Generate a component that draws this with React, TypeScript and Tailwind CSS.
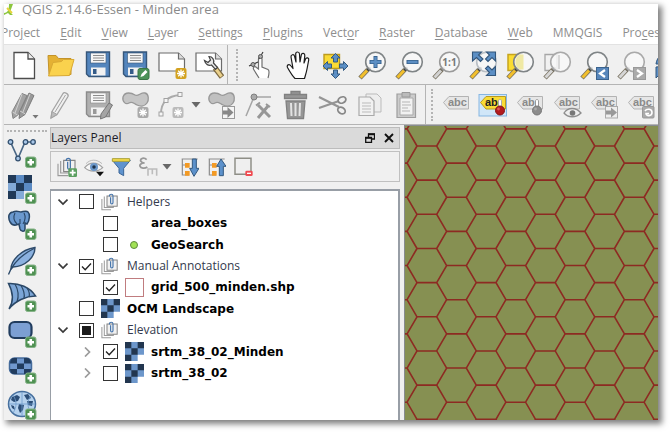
import { ReactNode } from "react";
import clsx from "clsx";

function Svg({ children, className = "size-[30px]" }: { children: ReactNode; className?: string }) {
  return (
    <svg viewBox="0 0 30 30" fill="none" className={clsx("shrink-0", className)} aria-hidden="true">
      {children}
    </svg>
  );
}

function AddBadge() {
  return (
    <g>
      <rect x="18.5" y="19" width="10.5" height="10.5" rx="2" fill="#4f9152" stroke="#87b489" />
      <path d="M23.75 21v6.5M20.5 24.25H27" stroke="#fff" strokeWidth="2.6" />
    </g>
  );
}

function StarBadge({ color, x = 18, y = 18 }: { color: string; x?: number; y?: number }) {
  return (
    <g transform={`translate(${x} ${y})`}>
      <rect x="0.5" y="0.5" width="11" height="11" rx="2" fill={color} />
      <path d="M6 2v8M2 6h8M3.2 3.2l5.6 5.6M8.8 3.2L3.2 8.8" stroke="#fff" strokeWidth="1.3" />
    </g>
  );
}

function Floppy({ body, edge, shutter }: { body: string; edge: string; shutter: string }) {
  return (
    <g>
      <path d="M4 2h22.500v24.500H6L3.500 24V2z" fill={body} stroke={edge} strokeWidth="1.4" />
      <rect x="7.500" y="3" width="15.500" height="10" fill="#f6f6f6" stroke={edge} strokeWidth="0.6" />
      <path d="M10 5.500h11M10 8h11M10 10.500h11" stroke="#8c8c8c" strokeWidth="1.1" />
      <rect x="8" y="17.500" width="14.500" height="8" fill="#f1f1f1" />
      <rect x="10" y="19" width="3.500" height="5" fill={shutter} />
    </g>
  );
}

function Lens({ handle = "#f2bf2c", edge = "#7f8486", tip = "#222", children }: { handle?: string; edge?: string; tip?: string; children?: ReactNode }) {
  return (
    <g>
      <path d="M11 19.500L3 28" stroke="#77705e" strokeWidth="4.600" />
      <path d="M10 20.500L3.500 27.500" stroke={handle} strokeWidth="3" />
      <circle cx="12" cy="18.800" r="2" fill={tip} />
      <circle cx="18.500" cy="12" r="9.800" fill="#f8f8f8" fillOpacity="0.85" stroke={edge} strokeWidth="1.6" />
      {children}
    </g>
  );
}

const NewIcon = () => (
  <Svg>
    <path d="M5 2.500h14l6.500 6.500v19.500H5z" fill="#fff" stroke="#4c4c4c" strokeWidth="1.3" />
    <path d="M19 2.500V9h6.500" fill="#eee" stroke="#4c4c4c" strokeWidth="1.3" />
  </Svg>
);

const OpenIcon = () => (
  <Svg>
    <path d="M2 5.500h8l2.500 3h12.500v16H3z" fill="#e4b133" stroke="#c3932a" />
    <path d="M2.500 26L7 12.500l8.500-1 2-2H28l-4.500 16z" fill="#fad24d" stroke="#d9a932" />
  </Svg>
);

const SaveIcon = () => (
  <Svg>
    <Floppy body="#5385bd" edge="#365679" shutter="#345b88" />
  </Svg>
);

const SaveAsIcon = () => (
  <Svg>
    <Floppy body="#5385bd" edge="#365679" shutter="#345b88" />
    <rect x="18" y="18.500" width="11" height="11" rx="2" fill="#4b9258" stroke="#397545" />
    <path d="M20.500 27l1-3 4-4 2 2-4 4z" fill="#fff" />
  </Svg>
);

const ComposerIcon = () => (
  <Svg>
    <path d="M2 3h19.500l6 6v12H2z" fill="#fff" stroke="#6b6b6b" strokeWidth="1.2" />
    <path d="M21.500 3v6h6" fill="#ddd" stroke="#6b6b6b" strokeWidth="1.2" />
    <StarBadge color="#d3a220" x={18} y={17.5} />
  </Svg>
);

const ManagerIcon = () => (
  <Svg>
    <path d="M2 3h19.500l6 6v12H2z" fill="#fff" stroke="#6b6b6b" strokeWidth="1.2" />
    <path d="M21.500 3v6h6" fill="#ddd" stroke="#6b6b6b" strokeWidth="1.2" />
    <path d="M21 18l7 9" stroke="#7b6840" strokeWidth="5.500" />
    <path d="M21.500 18.500l6 8" stroke="#ead08b" strokeWidth="3" />
    <path d="M10.500 10.500c1 4 4 5.500 7 4.500l4 4.500 2-2-4-4.500c1-3-1-6.500-4.500-6.500l1.500 3.500-2.500 2.500z" fill="#e8e8e8" stroke="#444" strokeWidth="1.2" />
  </Svg>
);

const TouchIcon = () => (
  <Svg>
    <path d="M13 28l-5-8c-2-3 1-4 2.500-2.500L12.500 19V9c0-3 3.500-3 3.500 0v8l6 2.500c1.500 1 1 5 0 8.500" fill="#fff" stroke="#6f6f6f" strokeWidth="1.200" />
    <path d="M3 16l9-4M13 9l4-7" stroke="#333" strokeWidth="1.1" />
    <circle cx="14.500" cy="6.500" r="2" fill="#aaa" stroke="#555" />
    <circle cx="7" cy="14.500" r="2" fill="#aaa" stroke="#555" />
  </Svg>
);

const PanIcon = () => (
  <Svg>
    <path d="M12 28.500c-3-3-5-6.500-7.500-11-1.200-2.500 1.700-4 3.500-1.500l2 2.500L8 7c-.3-2.600 3-3.200 3.600-.7L13 12l-.3-8c0-2.700 3.600-2.700 3.800 0l.5 8 1.300-7c.5-2.500 3.800-1.900 3.500.6L21 13l1.500-4c.9-2 3.700-1.200 3.200 1L24 19c-.6 3.500-1.500 6-2.500 9.500z" fill="#fff" stroke="#1b1b1b" strokeWidth="1.2" strokeLinejoin="round" />
  </Svg>
);

const PanSelectionIcon = () => (
  <Svg>
    <path d="M4 4.500h15.500v14H4z" fill="#fadb35" stroke="#bd9b1e" strokeWidth="1.4" />
    <path d="M15.500 3.500l4.500 4.500h-2.500v4h-4V8H11zM15.500 28.500l4.500-4.500h-2.500v-4h-4v4H11zM3 16l4.500-4.500V14h4v4h-4v2.500zM28 16l-4.500-4.500V14h-4v4h4v2.500z" fill="#5c8fc5" stroke="#33597f" strokeWidth="1" />
  </Svg>
);

const ZoomInIcon = () => (
  <Svg>
    <Lens>
      <path d="M18.500 6v12M12.500 12h12" stroke="#39638f" strokeWidth="4" />
      <path d="M18.500 7v10M13.500 12h10" stroke="#5d8fc4" strokeWidth="2.400" />
    </Lens>
  </Svg>
);

const ZoomOutIcon = () => (
  <Svg>
    <Lens>
      <path d="M12.500 12h12" stroke="#39638f" strokeWidth="4" />
      <path d="M13.500 12h10" stroke="#5d8fc4" strokeWidth="2.400" />
    </Lens>
  </Svg>
);

const ZoomNativeIcon = () => (
  <Svg>
    <Lens handle="#d2d2d2" edge="#9a9a9a" tip="#777">
      <text x="18.500" y="15.500" textAnchor="middle" fontSize="10" fontWeight="700" fill="#777" fontFamily="Open Sans, sans-serif">1:1</text>
    </Lens>
  </Svg>
);

const ZoomFullIcon = () => (
  <Svg>
    <Lens edge="#b9bfc5" />
    <path
      d="M4.500 2h9l-3 3 4.500 4-2.500 2.500L8.500 7.500l-4 3.500zM27.500 2h-9l3 3L17.500 9l2.500 2.500 4-4 3.500 3.500zM27.500 25.500h-9l3-3-4-4L20 16l4 4 3.500-3.500z"
      fill="#5c8fc5"
      stroke="#33567b"
      strokeWidth="1.100"
    />
  </Svg>
);

const ZoomSelectionIcon = () => (
  <Svg>
    <path d="M3 4.500h12v16H3z" fill="#fbdc31" stroke="#c6a41e" strokeWidth="1.500" />
    <Lens>
      <path d="M18.500 4.500h-3c-3 1-5 4-5 7.500s2 6.500 5 7.500h3z" fill="#f0e9a4" />
    </Lens>
  </Svg>
);

const ZoomLayerIcon = () => (
  <Svg>
    <path d="M3 4.500h12v16H3z" fill="#f1f1f1" stroke="#a6a6a6" strokeWidth="1.300" />
    <Lens handle="#d6d6d6" edge="#a9a9a9" tip="#777">
      <path d="M17 5v14" stroke="#ccc" strokeWidth="1.500" />
    </Lens>
  </Svg>
);

const ZoomLastIcon = () => (
  <Svg>
    <Lens />
    <rect x="17.500" y="17.500" width="12" height="12" fill="#5786bb" stroke="#3b638e" />
    <path d="M26 20l-5 3.500 5 3.500" stroke="#fff" strokeWidth="2.200" />
  </Svg>
);

const ZoomNextIcon = () => (
  <Svg>
    <Lens handle="#d6d6d6" edge="#a9a9a9" tip="#777" />
    <rect x="17.500" y="17.500" width="12" height="12" fill="#aaa" stroke="#999" />
    <path d="M21 20l5 3.500-5 3.500" stroke="#fff" strokeWidth="2.200" />
  </Svg>
);

const RefreshIcon = () => (
  <Svg>
    <path d="M3 14C4 6 10 3 16 3v6c-5 0-6 2-7 5z" fill="#5c8fc5" stroke="#33597f" />
    <path d="M3 17l10-1-3 4c3 3 7 3 10 0v7c-6 2-11 1-14-2l-3 3z" fill="#5c8fc5" stroke="#33597f" />
  </Svg>
);

const EditsIcon = () => (
  <Svg>
    <path d="M3 22L13 3.500l5 2L9 25l-5 3.500z" fill="#a3a3a3" stroke="#858585" />
    <path d="M11 21L20 3l5 2.500-9 19-6 4z" fill="#999" stroke="#7d7d7d" />
    <path d="M3.500 22l5 3M11 21l5.500 3M13 4l-7 19M21 4l-7 18" stroke="#d0d0d0" />
    <path d="M23.500 25h6l-3 3.500z" fill="#777" />
  </Svg>
);

const PencilIcon = () => (
  <Svg>
    <path d="M6 21.500L17 3.500c1.500-2 6 .5 5 3l-11 18-6 3.500z" fill="#f0f0f0" stroke="#a3a3a3" strokeWidth="1.300" />
    <path d="M6 21.500l5 3L5 28zM9 22L19.500 5" stroke="#a3a3a3" fill="#bbb" />
  </Svg>
);

const SaveEditsIcon = () => (
  <Svg>
    <Floppy body="#b0b0b0" edge="#8b8b8b" shutter="#999" />
    <path d="M18 24l8-11 3.500 2-7 12-5 2z" fill="#a5a5a5" stroke="#777" />
  </Svg>
);

const AddFeatureIcon = () => (
  <Svg>
    <path d="M3 7c2-6 9-4 12-2s6-3 10-2 4 7 2 10-6 4-10 2-5-4-8-2-7-1-6-6z" fill="#c5c5c5" stroke="#989898" strokeWidth="1.300" />
    <StarBadge color="#aaa" x={17} y={16.5} />
  </Svg>
);

const CurveIcon = () => (
  <Svg>
    <path d="M4 24c0-12 6-18 19-19" stroke="#aaa" strokeWidth="1.800" />
    <g fill="#f5f5f5" stroke="#a2a2a2">
      <rect x="2" y="22" width="4" height="4" />
      <rect x="7" y="8.500" width="4" height="4" />
      <rect x="21" y="2.500" width="4" height="4" />
    </g>
    <StarBadge color="#bbb" x={15} y={16.5} />
  </Svg>
);

const MoveFeatureIcon = () => (
  <Svg>
    <path d="M3 7c2-6 9-4 12-2s6-3 10-2 4 7 2 10-6 4-10 2-5-4-8-2-7-1-6-6z" fill="#c0c0c0" stroke="#989898" strokeWidth="1.300" />
    <rect x="16.500" y="16.500" width="12" height="12" fill="#f5f5f5" stroke="#999" />
    <path d="M17 20.500h4.500V17l6 5.500-6 5.500v-3.500H17z" fill="#888" />
  </Svg>
);

const NodeToolIcon = () => (
  <Svg>
    <path d="M3 26l8-19h17M11 7l17 0" stroke="#a5a5a5" strokeWidth="1.500" />
    <circle cx="11" cy="7" r="3" fill="#aaa" stroke="#7e7e7e" />
    <path d="M15 28l10-12M15 15l12 12" stroke="#979797" strokeWidth="3" />
    <path d="M13 15.500l4-3M23 14l4 3" stroke="#979797" strokeWidth="2" />
  </Svg>
);

const TrashIcon = () => (
  <Svg>
    <path d="M11 4V1.500h9V4M4.500 4.500h22v4h-22z" fill="#969696" stroke="#808080" strokeWidth="1.300" />
    <path d="M6 11h19l-1.500 17.500h-16z" fill="#969696" stroke="#808080" strokeWidth="1.300" />
    <path d="M11 13l.5 13M15.500 13v13M20 13l-.5 13" stroke="#e3e3e3" strokeWidth="2" />
  </Svg>
);

const CutIcon = () => (
  <Svg>
    <path d="M2 7l20 10M2 18l20-7" stroke="#959595" strokeWidth="2.200" />
    <ellipse cx="25" cy="10" rx="4" ry="3" stroke="#888" strokeWidth="1.800" transform="rotate(-25 25 10)" />
    <ellipse cx="24.500" cy="20.500" rx="4" ry="3" stroke="#888" strokeWidth="1.800" transform="rotate(35 24.500 20.500)" />
  </Svg>
);

const CopyIcon = () => (
  <Svg>
    <path d="M12 4h11l4 4v14H12z" fill="#eee" stroke="#bbb" />
    <path d="M5 7h11l4 4v14.500H5z" fill="#f2f2f2" stroke="#aaa" strokeWidth="1.200" />
    <path d="M8 13h9M8 16h9M8 19h9M8 22h9" stroke="#bbb" />
  </Svg>
);

const PasteIcon = () => (
  <Svg>
    <path d="M6 4h18.500v23.500H6z" fill="#ccc" stroke="#9d9d9d" strokeWidth="1.200" />
    <path d="M9 8h13v17H9z" fill="#f2f2f2" stroke="#aaa" />
    <path d="M11 2.500h8V7h-8z" fill="#bbb" stroke="#999" />
    <path d="M11 12h8M11 15h9M11 18h6M11 21h8" stroke="#b5b5b5" />
  </Svg>
);

function TagIcon({ active, label = "abc", children }: { active?: boolean; label?: string; children?: ReactNode }) {
  return (
    <Svg>
      {active && <rect x="1" y="4.500" width="27.500" height="21.500" fill="#d0e6f8" stroke="#85b6e2" />}
      <path d="M2.500 12.500L8 6.500h19.500v12.500H8z" fill={active ? "#f9dc35" : "#e6e6e6"} stroke={active ? "#b99b22" : "#b3b3b3"} />
      <text x="7" y="16" fontSize="11" fontWeight="700" fill={active ? "#222" : "#8a8a8a"} fontFamily="Liberation Sans, sans-serif">{label}</text>
      {children}
    </Svg>
  );
}

const PinTagIcon = ({ active }: { active?: boolean }) => (
  <TagIcon active={active} label="ab">
    <path d="M20.500 19v-8c0-2 3-2 3 0v8" fill="#fff" stroke={active ? "#aaa" : "#999"} />
    <circle cx="22" cy="20.500" r="4.500" fill={active ? "#b31b1e" : "#8c8c8c"} stroke={active ? "#831418" : "#777"} />
    <circle cx="20.500" cy="19" r="1.400" fill={active ? "#d9595a" : "#aaa"} />
  </TagIcon>
);

const ShowTagIcon = () => (
  <TagIcon>
    <path d="M12 23c4-6 12-6 17 0-5 5-13 5-17 0z" fill="#eee" stroke="#8d8d8d" strokeWidth="1.300" />
    <circle cx="20.500" cy="23" r="2.800" fill="#777" />
  </TagIcon>
);

const MoveTagIcon = () => (
  <TagIcon>
    <rect x="16.500" y="16.500" width="12" height="11.500" fill="#eee" stroke="#aaa" />
    <path d="M17 20.500h5v-3l6 5-6 5v-3h-5z" fill="#999" />
  </TagIcon>
);

const RotateTagIcon = () => (
  <TagIcon>
    <rect x="16.500" y="16.500" width="11.500" height="11.500" rx="1" fill="#aaa" stroke="#999" />
    <path d="M19 21c2-3 7-2 7 1.500 0 4-6 4-6 1h3" stroke="#fff" strokeWidth="1.600" />
  </TagIcon>
);

const VectorIcon = () => (
  <Svg>
    <path d="M3.500 4L11 20.500 18 4h7" stroke="#4b6886" strokeWidth="1.700" />
    <g fill="#a9c7e8" stroke="#33506f" strokeWidth="1.300">
      <circle cx="3.500" cy="4" r="2.300" />
      <circle cx="11" cy="20.500" r="2.300" />
      <circle cx="18.500" cy="4" r="2.300" />
      <circle cx="26" cy="4" r="2.300" />
    </g>
    <AddBadge />
  </Svg>
);

const RasterIcon = () => (
  <Svg>
    <path d="M1 1h24v16h-8v8H1z" fill="#5b8bc4" />
    <path d="M1 1h8v8H1zM17 1h8v8h-8zM9 9h8v8H9zM1 17h8v8H1z" fill="#213a58" />
    <path d="M1 9h8v8H1zM9 17h8v8H9z" fill="#83aad7" />
    <AddBadge />
  </Svg>
);

const ElephantIcon = () => (
  <Svg>
    <path d="M6 2c4-2 6 0 8 0s5-2 7 0 2 8-1 12l-2-1v6c0 3-4 3-5 0l-1-5-3 1C4 16 1 10 2 5c1-2 2-3 4-3z" fill="#6b99cf" stroke="#294666" strokeWidth="1.500" />
    <path d="M8 3C6 7 7 11 10 14M17 3c2 4 1 8-1 11M13 9v5" stroke="#294666" strokeWidth="1.100" />
    <AddBadge />
  </Svg>
);

const FeatherIcon = () => (
  <Svg>
    <path d="M4 23C4 15 13 4 28 1.500 28 11 19 20 6 21z" fill="#8bb1df" stroke="#2d4a69" strokeWidth="1.400" />
    <path d="M1.500 28.500C5 19 14 9 27 2.500" stroke="#2d4a69" strokeWidth="1.300" />
    <AddBadge />
  </Svg>
);

const FanIcon = () => (
  <Svg>
    <path d="M1.500 1.500C12 1 23 5 28.500 14 19 14 8 19 2 27c5-8 4-17-.5-25.500z" fill="#7ba5d6" stroke="#2a4766" strokeWidth="1.500" />
    <path d="M8 2c4 7 4 12 2 18M14 3.500c3 5 4 9 3 13M20 6c2 3 3 6 2 9" stroke="#2a4766" strokeWidth="1.200" />
    <AddBadge />
  </Svg>
);

const BoxIcon = () => (
  <Svg>
    <rect x="2.500" y="4" width="22" height="16" rx="5" fill="#7c9fd3" stroke="#213c5e" strokeWidth="2.200" />
    <AddBadge />
  </Svg>
);

const MaskIcon = () => (
  <Svg>
    <rect x="2.500" y="4" width="22" height="16" rx="5" fill="#7199cf" stroke="#456b9b" strokeWidth="1.500" />
    <path d="M10 9.500h7V15h-7zM3 15h7v5H7c-2.500 0-4-2-4-5zM17 15h7c0 3-1.500 5-4 5h-3zM7 4h3v5.500H3C3 6 4.500 4 7 4zM17 4h3c2.500 0 4 2 4 5.500h-7z" fill="#213c5e" />
    <AddBadge />
  </Svg>
);

const GlobeIcon = () => (
  <Svg>
    <ellipse cx="15" cy="14" rx="13.500" ry="12.500" fill="#b6d2ee" stroke="#47709e" strokeWidth="1.500" />
    <path d="M5 7l5-2 3 2-2 4-4 1-3-2zM12 14l5 1-1 5-3 3-2-5zM17 5l4-1 3 4-4 2zM20 11l6 0-1 5-4-1zM4 15l3 1 1 4-3-2z" fill="#2c4e77" />
    <path d="M2 14h26M15 2v24M6 5c4 6 4 12 0 18M24 5c-4 6-4 12 0 18" stroke="#6d9bca" strokeWidth="0.800" />
    <AddBadge />
  </Svg>
);

const GroupIcon = ({ className, badge }: { className?: string; badge?: boolean }) => (
  <Svg className={className}>
    <path d="M1.500 10v18h15M5.500 6v18h15v-4" stroke="#9a9a9a" strokeWidth="1.700" />
    <path d="M10 5h17v17H10z" fill="#f1f1f1" stroke="#858585" strokeWidth="1.700" />
    <path d="M14 6v-1c0-4 6-4 6 0v11c0 3-4 3-4 0V7" stroke="#4574ab" strokeWidth="1.900" />
    {badge && (
      <g>
        <rect x="17" y="17" width="13" height="13" rx="2" fill="#5b9f60" />
        <path d="M23.500 19v9M19 23.500h9" stroke="#fff" strokeWidth="2.600" />
      </g>
    )}
  </Svg>
);

const EyeIcon = () => (
  <Svg className="size-5">
    <path d="M1 16C8 7 20 7 28 16c-7 7-20 7-27 0z" fill="#f6f6f6" stroke="#a2a2a2" strokeWidth="1.800" />
    <path d="M3 10C10 3 19 3 27 10" stroke="#bbb" strokeWidth="1.500" />
    <circle cx="15" cy="15" r="6" fill="#6b97c9" />
    <circle cx="15" cy="15" r="2.600" fill="#1d3048" />
    <path d="M18 22h12l-6 7z" fill="#111" />
  </Svg>
);

const FilterIcon = () => (
  <Svg className="size-5">
    <path d="M2 5h27L19 17v11l-7-4v-7z" fill="#5f93ce" stroke="#3a6596" strokeWidth="1.500" />
    <path d="M2 2.500h26v4H2z" fill="#f6dc4a" stroke="#a9a13a" strokeWidth="1.500" />
  </Svg>
);

const ExpressionIcon = () => (
  <Svg className="size-5">
    <path d="M13 4C9 0 3 2 4 6c1 2 4 3 6 3-5 0-8 2-7 5s7 4 11 1" stroke="#999" strokeWidth="2.600" />
    <path d="M15 28V18h13v10M21.500 18v8" stroke="#bcbcbc" strokeWidth="2.400" />
  </Svg>
);

const TreeIcon = ({ up }: { up?: boolean }) => (
  <Svg className="size-5">
    <path d="M4 3h24M5 3v24h10M5 12h8" stroke="#8d8d8d" strokeWidth="1.800" />
    <path d="M9 9h7v7H9zM9 21h7v7H9z" fill="#f39a24" />
    <path d={up ? "M16 14l6.500-11L30 14h-4v14h-6V14z" : "M16 17l6.500 12L30 17h-4V3h-6v14z"} fill="#5c91cb" stroke="#32587f" strokeWidth="1.500" />
  </Svg>
);

const RemoveIcon = () => (
  <Svg className="size-5">
    <path d="M3 2h24v24H3z" fill="#efefef" stroke="#8e8e86" strokeWidth="2.200" />
    <rect x="18.500" y="20.500" width="11" height="8" rx="2" fill="#f04a50" />
    <path d="M21 24.500h6" stroke="#fff" strokeWidth="2" />
  </Svg>
);

const LayerRasterIcon = () => (
  <Svg className="size-[19px]">
    <path d="M0 0h30v20H20v10H0z" fill="#6d97cb" />
    <path d="M0 0h10v10H0zM20 0h10v10H20zM10 10h10v10H10zM0 20h10v10H0z" fill="#22364f" />
  </Svg>
);

const DropArrow = () => (
  <svg viewBox="0 0 10 6" className="h-[6px] w-[10px] shrink-0" aria-hidden="true">
    <path d="M0.500 0h9L5 5.500z" fill="#686868" />
  </svg>
);

function Tool({ label, children }: { label: string; children: ReactNode }) {
  return (
    <button type="button" aria-label={label} className="flex w-[37px] shrink-0 justify-center">
      {children}
    </button>
  );
}

function Grip() {
  return <span className="mx-1 h-8 w-0 shrink-0 border-l-2 border-dotted border-[#b4b4b4]" />;
}

const menus = [
  ["Pro", "j", "ect"],
  ["", "E", "dit"],
  ["", "V", "iew"],
  ["", "L", "ayer"],
  ["", "S", "ettings"],
  ["", "P", "lugins"],
  ["Vect", "o", "r"],
  ["", "R", "aster"],
  ["", "D", "atabase"],
  ["", "W", "eb"],
  ["MMQGIS", "", ""],
  ["Pro", "c", "essing"],
];

function CheckBox({ id, state }: { id: string; state: string }) {
  return (
    <span className="relative mr-[7px] size-[15px] shrink-0">
      <input
        id={id}
        type="checkbox"
        defaultChecked={state === "on"}
        className="peer block size-[15px] appearance-none border border-[#333] bg-white"
      />
      <svg viewBox="0 0 15 15" fill="none" className="pointer-events-none absolute inset-0 hidden peer-checked:block">
        <path d="M3 7.500l3.200 3.300L12 4.500" stroke="#222" strokeWidth="1.300" />
      </svg>
      {state === "partial" && <span className="pointer-events-none absolute inset-[3px] bg-[#1c1c1c]" />}
    </span>
  );
}

type Row = {
  name: string;
  icon: "group" | "none" | "point" | "polygon" | "raster";
  state: "on" | "off" | "partial";
  child?: boolean;
  arrow?: "open" | "closed";
};

const rows: Row[] = [
  { name: "Helpers", icon: "group", state: "off", arrow: "open" },
  { name: "area_boxes", icon: "none", state: "off", child: true },
  { name: "GeoSearch", icon: "point", state: "off", child: true },
  { name: "Manual Annotations", icon: "group", state: "on", arrow: "open" },
  { name: "grid_500_minden.shp", icon: "polygon", state: "on", child: true },
  { name: "OCM Landscape", icon: "raster", state: "off" },
  { name: "Elevation", icon: "group", state: "partial", arrow: "open" },
  { name: "srtm_38_02_Minden", icon: "raster", state: "on", child: true, arrow: "closed" },
  { name: "srtm_38_02", icon: "raster", state: "off", child: true, arrow: "closed" },
];

function LayerRow({ row }: { row: Row }) {
  return (
    <li className={clsx("flex items-center", row.child && "pl-6")}>
      <span className="flex w-7 shrink-0 justify-center pr-1">
        {row.arrow && (
          <button type="button" aria-label={`Toggle ${row.name}`}>
            <svg viewBox="0 0 10 10" fill="none" className="size-[10px]">
              <path
                d={row.arrow === "open" ? "M0.500 2.500L5 7l4.500-4.500" : "M3 0.500L7.500 5 3 9.500"}
                stroke={row.arrow === "open" ? "#3a3a3a" : "#9b9b9b"}
                strokeWidth="1.700"
              />
            </svg>
          </button>
        )}
      </span>
      <CheckBox id={row.name} state={row.state} />
      <span className="flex w-[26px] shrink-0 items-center">
        {row.icon === "group" && <GroupIcon className="size-[18px]" />}
        {row.icon === "raster" && <LayerRasterIcon />}
        {row.icon === "polygon" && <span className="size-[19px] border border-[#c07c7f] bg-white" />}
        {row.icon === "point" && <span className="ml-[5px] size-2 rounded-full border border-[#5e8a3e] bg-[#a2e256]" />}
      </span>
      <label
        htmlFor={row.name}
        className={clsx(
          "whitespace-nowrap text-[12px]",
          row.icon === "group" ? "text-[#333a4d]" : "font-['DejaVu_Sans'] font-bold text-black",
        )}
      >
        {row.name}
      </label>
    </li>
  );
}

// Flat-topped hexagons: every column is shifted by half a cell height.
function hexGrid(width: number, height: number) {
  const step = 29.63;
  const half = 17.08;
  const side = 19.7;
  let d = "";
  for (let col = -1; col * step < width; col++) {
    const x = 12 + col * step;
    const start = col % 2 === 0 ? 20 - half * 2 : 20 - half * 3;
    for (let y = start; y < height + half; y += half * 2) {
      d += `M${x} ${y}h${side}l${step - side} ${half}M${x + side} ${y}l${step - side} ${-half}`;
    }
  }
  return d;
}

export default function App() {
  return (
    <div className="flex min-h-screen bg-white pt-1 pr-3 pb-3 pl-1 font-['Open_Sans',sans-serif]">
      <div className="flex min-w-0 flex-1 flex-col overflow-hidden bg-[#f0f0f0] shadow-[3px_3px_6px_1px_rgba(0,0,0,0.5)]">
        <header className="flex h-[18px] shrink-0 items-start gap-1 overflow-hidden bg-white">
          <svg viewBox="0 0 14 12" className="h-3 w-[14px] shrink-0" aria-hidden="true">
            <path d="M0 9c4 0 5-4 5-9h4L6 8l3 3H6L4 9l-4 2z" fill="#8cc63e" />
            <path d="M3 4l5 5" stroke="#e7d339" strokeWidth="2" />
          </svg>
          <h1 className="-mt-1 text-[13px] leading-[18px] whitespace-nowrap text-[#8a8a8a]">QGIS 2.14.6-Essen - Minden area</h1>
        </header>
        <div className="shrink-0 overflow-hidden bg-white">
          <nav className="-ml-[3px] flex h-[22px] gap-5 text-[12px] leading-[22px] text-[#8e8e8e]">
            {menus.map(([before, key, after]) => (
              <button type="button" key={before + key + after} className="shrink-0">
                {before}
                <span className="underline underline-offset-2">{key}</span>
                {after}
              </button>
            ))}
          </nav>
        </div>

        <div className="flex h-[41px] shrink-0 items-center overflow-hidden border-t border-b border-t-[#e2e2e2] border-b-[#b4b4b4] pl-px">
          <Tool label="New"><NewIcon /></Tool>
          <Tool label="Open"><OpenIcon /></Tool>
          <Tool label="Save"><SaveIcon /></Tool>
          <Tool label="Save as"><SaveAsIcon /></Tool>
          <Tool label="New composer"><ComposerIcon /></Tool>
          <Tool label="Composer manager"><ManagerIcon /></Tool>
          <span className="mr-1 h-full w-px shrink-0 bg-[#b4b4b4]" />
          <Grip />
          <Tool label="Touch"><TouchIcon /></Tool>
          <Tool label="Pan"><PanIcon /></Tool>
          <Tool label="Pan to selection"><PanSelectionIcon /></Tool>
          <Tool label="Zoom in"><ZoomInIcon /></Tool>
          <Tool label="Zoom out"><ZoomOutIcon /></Tool>
          <Tool label="Zoom to native"><ZoomNativeIcon /></Tool>
          <Tool label="Zoom full"><ZoomFullIcon /></Tool>
          <Tool label="Zoom to selection"><ZoomSelectionIcon /></Tool>
          <Tool label="Zoom to layer"><ZoomLayerIcon /></Tool>
          <Tool label="Zoom last"><ZoomLastIcon /></Tool>
          <Tool label="Zoom next"><ZoomNextIcon /></Tool>
          <Tool label="Refresh"><RefreshIcon /></Tool>
        </div>

        <div className="flex h-10 shrink-0 items-center overflow-hidden border-b border-[#b4b4b4] pl-px">
          <Tool label="Current edits"><EditsIcon /></Tool>
          <Tool label="Toggle editing"><PencilIcon /></Tool>
          <Tool label="Save edits"><SaveEditsIcon /></Tool>
          <Tool label="Add feature"><AddFeatureIcon /></Tool>
          <Tool label="Add circular string"><CurveIcon /></Tool>
          <span className="flex w-3 shrink-0 justify-center"><DropArrow /></span>
          <Tool label="Move feature"><MoveFeatureIcon /></Tool>
          <Tool label="Node tool"><NodeToolIcon /></Tool>
          <Tool label="Delete"><TrashIcon /></Tool>
          <Tool label="Cut"><CutIcon /></Tool>
          <Tool label="Copy"><CopyIcon /></Tool>
          <Tool label="Paste"><PasteIcon /></Tool>
          <span className="mx-px h-full w-px shrink-0 bg-[#b4b4b4]" />
          <Grip />
          <Tool label="Labels"><TagIcon /></Tool>
          <Tool label="Highlight pinned labels"><PinTagIcon active /></Tool>
          <Tool label="Pin labels"><PinTagIcon /></Tool>
          <Tool label="Show labels"><ShowTagIcon /></Tool>
          <Tool label="Move label"><MoveTagIcon /></Tool>
          <Tool label="Rotate label"><RotateTagIcon /></Tool>
        </div>

        <div className="flex flex-1">
          <aside className="flex w-[46px] shrink-0 flex-col gap-[6px] pt-[5px] pl-[3px]">
            <span className="w-10 border-t-2 border-dotted border-[#b4b4b4]" />
            <button type="button" aria-label="Add vector layer"><VectorIcon /></button>
            <button type="button" aria-label="Add raster layer"><RasterIcon /></button>
            <button type="button" aria-label="Add PostGIS layer"><ElephantIcon /></button>
            <button type="button" aria-label="Add SpatiaLite layer"><FeatherIcon /></button>
            <button type="button" aria-label="Add MSSQL layer"><FanIcon /></button>
            <button type="button" aria-label="Add Oracle layer"><BoxIcon /></button>
            <button type="button" aria-label="Add Oracle raster"><MaskIcon /></button>
            <button type="button" aria-label="Add WMS layer"><GlobeIcon /></button>
          </aside>

          <section className="flex w-[350px] shrink-0 flex-col pt-[2px]">
            <div className="flex h-[22px] items-center border border-[#bcbcbc] bg-[#dadada]">
              <h2 className="flex-1 text-[12px] text-[#1c1c28]">Layers Panel</h2>
              <button type="button" aria-label="Float" className="mr-[9px]">
                <svg viewBox="0 0 10 10" fill="none" className="size-[10px]">
                  <path d="M3.500 4V1h6v5H7" stroke="#111" strokeWidth="1.300" />
                  <path d="M3 1.300h7M0 4.800h7" stroke="#111" strokeWidth="1.800" />
                  <path d="M0.700 4.500h5.800v5H0.700z" stroke="#111" strokeWidth="1.300" />
                </svg>
              </button>
              <button type="button" aria-label="Close" className="mr-[5px]">
                <svg viewBox="0 0 10 10" className="size-[10px]">
                  <path d="M1 1l8 8M9 1L1 9" stroke="#111" strokeWidth="1.900" />
                </svg>
              </button>
            </div>
            <div className="mt-[2px] flex h-[31px] items-center gap-[7px] border border-[#c0c0c0] pl-[6px]">
              <button type="button" aria-label="Add group"><GroupIcon className="size-5" badge /></button>
              <button type="button" aria-label="Visibility"><EyeIcon /></button>
              <button type="button" aria-label="Filter legend"><FilterIcon /></button>
              <button type="button" aria-label="Filter by expression" className="flex items-center gap-1"><ExpressionIcon /><DropArrow /></button>
              <button type="button" aria-label="Expand all"><TreeIcon /></button>
              <button type="button" aria-label="Collapse all"><TreeIcon up /></button>
              <button type="button" aria-label="Remove layer"><RemoveIcon /></button>
            </div>
            <div className="mt-[7px] flex-1 border-2 border-b-0 border-l border-[#989ea6] bg-white">
              <ul className="grid h-[193px] auto-rows-fr">
                {rows.map((row) => (
                  <LayerRow key={row.name} row={row} />
                ))}
              </ul>
            </div>
          </section>

          <main className="relative ml-1 min-w-0 flex-1 overflow-hidden border-t border-l border-[#888c90] bg-[#869052]">
            <svg className="absolute inset-0 size-full" fill="none" aria-label="Map canvas">
              <path d={hexGrid(2400, 1600)} stroke="#8d2a22" strokeWidth="1.600" />
            </svg>
          </main>
        </div>
      </div>
    </div>
  );
}
